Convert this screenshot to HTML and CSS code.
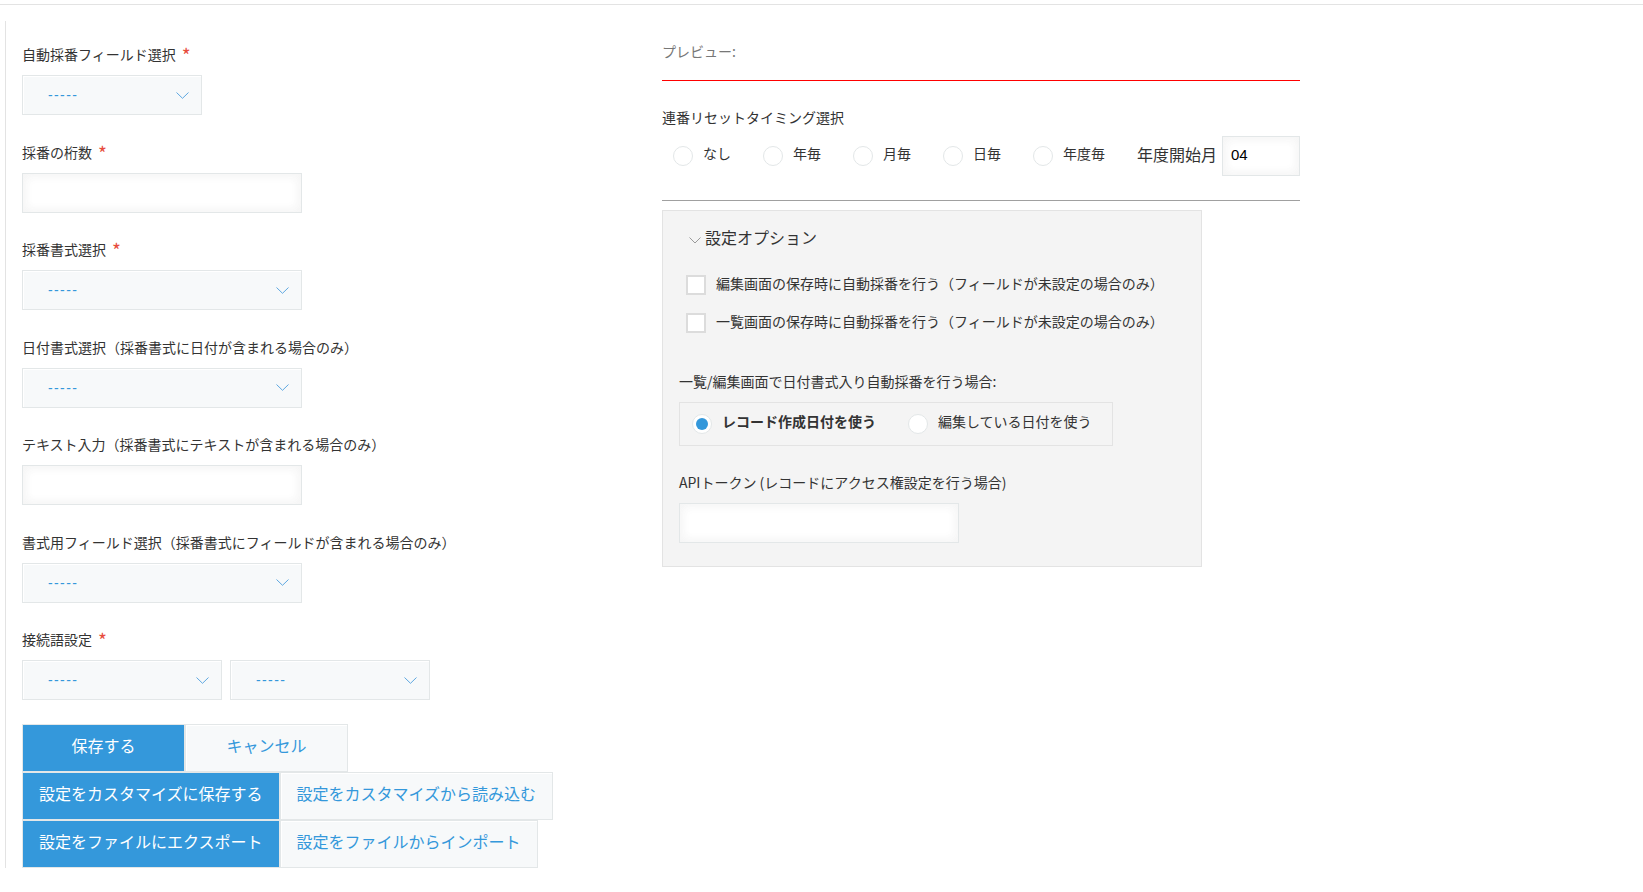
FILE: index.html
```html
<!DOCTYPE html>
<html lang="ja">
<head>
<meta charset="utf-8">
<title>自動採番プラグイン設定</title>
<link rel="stylesheet" href="styles.css">
</head>
<body>
<div class="topbar"></div>
<div class="page">
  <div class="left">
    <div class="field">
      <div class="label">自動採番フィールド選択<span class="req">*</span></div>
      <div class="select w180"><span class="select-text">-----</span><svg class="chev" width="13" height="7" viewBox="0 0 13 7"><polyline points="0.5,0.5 6.5,6.3 12.5,0.5" fill="none" stroke="#5ea8e0" stroke-width="1"/></svg></div>
    </div>
    <div class="field">
      <div class="label">採番の桁数<span class="req">*</span></div>
      <div class="input w280"></div>
    </div>
    <div class="field">
      <div class="label">採番書式選択<span class="req">*</span></div>
      <div class="select w280"><span class="select-text">-----</span><svg class="chev" width="13" height="7" viewBox="0 0 13 7"><polyline points="0.5,0.5 6.5,6.3 12.5,0.5" fill="none" stroke="#5ea8e0" stroke-width="1"/></svg></div>
    </div>
    <div class="field">
      <div class="label">日付書式選択（採番書式に日付が含まれる場合のみ）</div>
      <div class="select w280"><span class="select-text">-----</span><svg class="chev" width="13" height="7" viewBox="0 0 13 7"><polyline points="0.5,0.5 6.5,6.3 12.5,0.5" fill="none" stroke="#5ea8e0" stroke-width="1"/></svg></div>
    </div>
    <div class="field">
      <div class="label">テキスト入力（採番書式にテキストが含まれる場合のみ）</div>
      <div class="input w280"></div>
    </div>
    <div class="field">
      <div class="label">書式用フィールド選択（採番書式にフィールドが含まれる場合のみ）</div>
      <div class="select w280"><span class="select-text">-----</span><svg class="chev" width="13" height="7" viewBox="0 0 13 7"><polyline points="0.5,0.5 6.5,6.3 12.5,0.5" fill="none" stroke="#5ea8e0" stroke-width="1"/></svg></div>
    </div>
    <div class="field last">
      <div class="label">接続語設定<span class="req">*</span></div>
      <div class="select-pair">
        <div class="select w200"><span class="select-text">-----</span><svg class="chev" width="13" height="7" viewBox="0 0 13 7"><polyline points="0.5,0.5 6.5,6.3 12.5,0.5" fill="none" stroke="#5ea8e0" stroke-width="1"/></svg></div>
        <div class="select w200"><span class="select-text">-----</span><svg class="chev" width="13" height="7" viewBox="0 0 13 7"><polyline points="0.5,0.5 6.5,6.3 12.5,0.5" fill="none" stroke="#5ea8e0" stroke-width="1"/></svg></div>
      </div>
    </div>
    <div class="buttons">
      <div class="btn-row">
        <div class="btn btn-primary">保存する</div>
        <div class="btn btn-normal">キャンセル</div>
      </div>
      <div class="btn-row">
        <div class="btn btn-primary">設定をカスタマイズに保存する</div>
        <div class="btn btn-normal">設定をカスタマイズから読み込む</div>
      </div>
      <div class="btn-row">
        <div class="btn btn-primary">設定をファイルにエクスポート</div>
        <div class="btn btn-normal">設定をファイルからインポート</div>
      </div>
    </div>
  </div>

  <div class="right">
    <div class="preview">プレビュー:</div>
    <div class="reset-label">連番リセットタイミング選択</div>
    <div class="reset-row">
      <div class="radio-item"><span class="radio"></span><span class="radio-text">なし</span></div>
      <div class="radio-item"><span class="radio"></span><span class="radio-text">年毎</span></div>
      <div class="radio-item"><span class="radio"></span><span class="radio-text">月毎</span></div>
      <div class="radio-item"><span class="radio"></span><span class="radio-text">日毎</span></div>
      <div class="radio-item"><span class="radio"></span><span class="radio-text">年度毎</span></div>
      <span class="year-start-label">年度開始月</span>
      <div class="input month-input">04</div>
    </div>
    <div class="divider"></div>
    <div class="options">
      <div class="opt-title"><svg class="opt-chev" width="12" height="7" viewBox="0 0 12 7"><polyline points="0.5,0.5 6,6 11.5,0.5" fill="none" stroke="#9a9a9a" stroke-width="1"/></svg><span class="opt-title-text">設定オプション</span></div>
      <div class="check-item first"><span class="checkbox"></span><span class="check-text">編集画面の保存時に自動採番を行う（フィールドが未設定の場合のみ）</span></div>
      <div class="check-item"><span class="checkbox"></span><span class="check-text">一覧画面の保存時に自動採番を行う（フィールドが未設定の場合のみ）</span></div>
      <div class="sub-label">一覧/編集画面で日付書式入り自動採番を行う場合:</div>
      <div class="radio-group">
        <div class="radio-item"><span class="radio checked"><span class="dot"></span></span><span class="radio-text bold">レコード作成日付を使う</span></div>
        <div class="radio-item end"><span class="radio"></span><span class="radio-text">編集している日付を使う</span></div>
      </div>
      <div class="api-label">APIトークン (レコードにアクセス権設定を行う場合)</div>
      <div class="input w280 api-input"></div>
    </div>
  </div>
</div>
</body>
</html>
```

FILE: styles.css
```css
* {
  box-sizing: border-box;
}

body {
  margin: 0;
  font-family: "Noto Sans CJK JP", "Noto Sans", sans-serif;
  font-size: 14px;
  color: #333;
  background: #fff;
}

.topbar {
  height: 5px;
  border-bottom: 1px solid #e3e3e3;
}

.page {
  display: flex;
  align-items: flex-start;
  margin-top: 16px;
  padding-left: 5px;
}

/* left column */
.left {
  width: 657px;
  flex: 0 0 auto;
  border-left: 1px solid #e3e3e3;
  padding: 24px 0 0 16px;
}

.field {
  margin-bottom: 27.5px;
}

.field.last {
  margin-bottom: 0;
}

.label {
  height: 20px;
  line-height: 18px;
  margin-bottom: 10px;
  white-space: nowrap;
}

.req {
  color: #e74c3c;
  margin-left: 6px;
  font-size: 19px;
  line-height: 1px;
  vertical-align: -3px;
}

.select {
  display: flex;
  align-items: center;
  justify-content: space-between;
  height: 40px;
  border: 1px solid #e3e7e8;
  background: #f7f9fa;
  box-shadow: 1px 1px 1px #fff inset;
  padding: 0 12px 0 25px;
}

.select-text {
  font-family: "Liberation Sans", sans-serif;
  font-size: 14px;
  letter-spacing: 1.4px;
  color: #3498db;
}

.chev {
  display: block;
}

.select-pair {
  display: flex;
  gap: 8px;
}

.w180 { width: 180px; }
.w200 { width: 200px; }
.w280 { width: 280px; }

.input {
  height: 40px;
  border: 1px solid #e3e7e8;
  background: #fff;
  box-shadow: 1px 1px 12px #f5f5f5 inset, -1px -1px 12px #f5f5f5 inset;
}

/* buttons */
.buttons {
  margin-top: 24px;
}

.btn-row {
  display: flex;
}

.btn {
  height: 48px;
  min-width: 163px;
  padding: 0 16px;
  border: 1px solid #e3e7e8;
  font-size: 16px;
  line-height: 41px;
  text-align: center;
  white-space: nowrap;
}

.btn-primary {
  background: #3498db;
  color: #fff;
}

.btn-normal {
  background: #f7f9fa;
  color: #3498db;
  box-shadow: 1px 1px 1px #fff inset;
}

/* right column */
.right {
  width: 638px;
  flex: 0 0 auto;
  padding-top: 22px;
}

.preview {
  line-height: 16px;
  color: #777;
  padding-bottom: 21px;
  border-bottom: 1px solid #ff0000;
}

.reset-label {
  margin-top: 28px;
  height: 20px;
  line-height: 16px;
}

.reset-row {
  display: flex;
  align-items: center;
  height: 40px;
  margin-top: 7px;
  padding-left: 11px;
}

.radio-item {
  display: flex;
  align-items: center;
  margin-right: 32px;
}

.radio-item.end {
  margin-right: 0;
}

.radio {
  display: flex;
  align-items: center;
  justify-content: center;
  width: 20px;
  height: 20px;
  border-radius: 50%;
  border: 1px solid #e3e7e8;
  background: #fff;
  margin-right: 10px;
  flex: 0 0 auto;
}

.radio .dot {
  width: 12px;
  height: 12px;
  border-radius: 50%;
  background: #3498db;
}

.radio-text {
  line-height: 20px;
  padding-bottom: 7px;
  white-space: nowrap;
}

.radio-text.bold {
  font-weight: 700;
}

.year-start-label {
  font-size: 16px;
  line-height: 20px;
  padding-bottom: 5px;
  margin-right: 5px;
  white-space: nowrap;
}

.month-input {
  width: 80px;
  padding-left: 8px;
  font-family: "Liberation Sans", sans-serif;
  font-size: 15px;
  line-height: 35px;
  color: #000;
}

.divider {
  margin-top: 24px;
  height: 1px;
  background: #a0a0a0;
}

.options {
  width: 540px;
  margin-top: 9px;
  border: 1px solid #e3e3e3;
  background: #f4f4f4;
  padding: 16px 16px 23px;
}

.opt-title {
  display: flex;
  align-items: center;
  height: 24px;
  padding-left: 10px;
  font-size: 16px;
}

.opt-title-text {
  line-height: 20px;
  padding-bottom: 4px;
}

.opt-chev {
  display: block;
  margin: 2px 4px 0 0;
}

.check-item {
  display: flex;
  align-items: center;
  margin-top: 18px;
  padding-left: 7px;
  height: 20px;
}

.check-item.first {
  margin-top: 24px;
}

.checkbox {
  width: 20px;
  height: 20px;
  border: 2px solid #dcdcdc;
  background: #fff;
  margin-right: 10px;
  flex: 0 0 auto;
}

.check-text {
  line-height: 20px;
  padding-bottom: 4px;
  white-space: nowrap;
}

.sub-label {
  margin-top: 40px;
  height: 20px;
  line-height: 16px;
}

.radio-group {
  display: inline-flex;
  align-items: center;
  height: 44px;
  margin-top: 9px;
  border: 1px solid #e3e3e3;
  padding: 0 20px 0 12px;
}

.api-label {
  margin-top: 28px;
  height: 20px;
  line-height: 16px;
}

.api-input {
  margin-top: 9px;
}
```
